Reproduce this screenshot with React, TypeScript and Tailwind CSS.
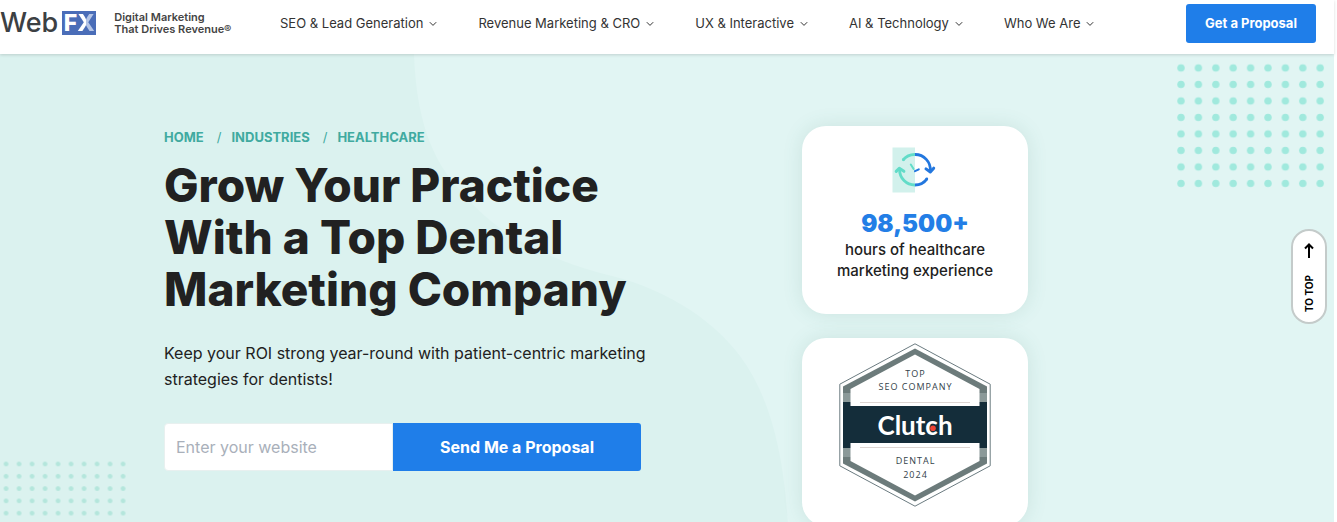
import type { ReactNode } from 'react'

const NAV = [
  'SEO & Lead Generation',
  'Revenue Marketing & CRO',
  'UX & Interactive',
  'AI & Technology',
  'Who We Are',
]

const CRUMBS = ['Home', 'Industries', 'Healthcare']

function Logo() {
  return (
    <a href="/" aria-label="WebFX" className="flex items-center gap-1">
      <span className="text-[27px] leading-[26px] font-medium text-[#3c4043]">Web</span>
      <span className="flex h-6 w-[34px] items-center justify-center bg-[#4a6db8] text-[23px] leading-6 font-extrabold">
        <span className="text-white">F</span>
        <span className="bg-linear-to-r from-white from-50% to-[#b4c4e6] to-50% bg-clip-text text-transparent">X</span>
      </span>
    </a>
  )
}

function Chevron() {
  return (
    <svg width="8" height="6" viewBox="0 0 8 6" fill="none" stroke="#333" aria-hidden="true">
      <path d="M0.8 1.2 4 4.4 7.2 1.2" />
    </svg>
  )
}

function Header() {
  return (
    <header className="relative z-10 flex h-[54px] items-start bg-white pr-[18px] shadow-[0_1px_3px_rgba(0,0,0,0.15)]">
      <div className="flex h-[46px] w-[280px] shrink-0 items-center gap-[18px]">
        <Logo />
        <p className="text-[11px] leading-3 font-semibold text-[#444]">
          Digital Marketing
          <br />
          That Drives Revenue®
        </p>
      </div>
      <nav className="flex h-12 items-center gap-[41px]">
        {NAV.map((item) => (
          <button key={item} type="button" className="flex items-center gap-1.5 text-[13px] whitespace-nowrap text-[#333]">
            {item}
            <Chevron />
          </button>
        ))}
      </nav>
      <a
        href="#proposal"
        className="mt-1 ml-auto flex h-[39px] w-[130px] items-center justify-center rounded-[3px] bg-[#1f7ee9] text-[13px] font-bold text-white"
      >
        Get a Proposal
      </a>
    </header>
  )
}

function Backdrop() {
  return (
    <svg className="absolute inset-0 h-full w-full" aria-hidden="true">
      <defs>
        <pattern id="dots-lg" width="17.4" height="16.5" patternUnits="userSpaceOnUse" x="1172.3" y="5.7">
          <circle cx="8.7" cy="8.2" r="3.7" fill="#a0e9dd" />
        </pattern>
        <pattern id="dots-sm" width="13" height="12.3" patternUnits="userSpaceOnUse" x="-0.4" y="403.8">
          <circle cx="6.5" cy="6.1" r="2.4" fill="#b4e6dc" />
        </pattern>
      </defs>
      <path
        d="M414 0C416 60 430 106 462 138C494 178 540 202 600 219C660 232 710 262 740 302C770 342 784 400 788 472L790 800H3000V0Z"
        fill="#e1f5f3"
      />
      <rect x="1172.3" y="5.7" width="156.6" height="132" fill="url(#dots-lg)" />
      <rect x="-0.4" y="403.8" width="130" height="73.8" fill="url(#dots-sm)" />
    </svg>
  )
}

function Card({ children }: { children: ReactNode }) {
  return (
    <div className="flex h-[188px] w-[226px] flex-col items-center rounded-3xl bg-white shadow-[0_0_20px_rgba(70,130,115,0.14)]">
      {children}
    </div>
  )
}

function HoursIcon() {
  return (
    <svg width="46" height="46" viewBox="0 0 46 46" fill="none" strokeWidth="2.8" strokeLinecap="round" strokeLinejoin="round" aria-hidden="true">
      <rect x="0.5" y="0.5" width="22.5" height="45" fill="#d2f1ec" />
      <g stroke="#62dcc8">
        <path d="M23 7.5A15.2 15.2 0 0 0 11 13" strokeLinecap="butt" />
        <path d="M23 38A15.2 15.2 0 0 1 7.6 22.5" strokeLinecap="butt" />
        <path d="M11.3 12.8v0" />
        <path d="M4.2 24.4 7.3 21.2l4.6 3.1" strokeWidth="3" />
        <path d="M18.8 17.5 21.6 22" strokeWidth="2" />
      </g>
      <g stroke="#2377de">
        <path d="M23 7.5A15.2 15.2 0 0 1 38.3 24" strokeLinecap="butt" />
        <path d="M23 38A15.2 15.2 0 0 0 35 31.8" strokeLinecap="butt" />
        <path d="M34.8 32v0" />
        <path d="M34 21.9 38.3 25l3.4-3.8" strokeWidth="3" />
        <path d="M23 24.2 26.8 22.3" strokeWidth="2" />
      </g>
    </svg>
  )
}

function ClutchBadge() {
  return (
    <svg width="152" height="164" viewBox="0 0 152 164" role="img" aria-label="Clutch top SEO company, dental, 2024">
      <path d="M76 0.8 151.2 41.2V122.8L76 163.2 0.8 122.8V41.2Z" fill="white" stroke="#6b7b80" strokeWidth="1" />
      <path d="M76 5.5 148 43.5V120.5L76 158.5 4 120.5V43.5Z" fill="#6c7b7b" />
      <path d="M4 50h144v9H4zM4 105h144v9H4z" fill="#8b9999" />
      <path d="M4 59h144v46H4z" fill="#142d3a" />
      <path d="M76 11.5 140.5 46V63H11.5V46ZM11.5 100h129v18L76 152.5 11.5 118Z" fill="white" />
      <path d="M21 59.5h110M21 104.5h110" stroke="#ddd5d2" />
      <g fill="#33424a" fontFamily="'Open Sans', sans-serif" fontSize="9" fontWeight="500" textAnchor="middle" letterSpacing="1">
        <text x="76.5" y="33.5">TOP</text>
        <text x="76.5" y="47">SEO COMPANY</text>
        <text x="76.5" y="121">DENTAL</text>
        <text x="76.5" y="134.5">2024</text>
      </g>
      <text x="76" y="91.5" textAnchor="middle" fill="white" fontFamily="Lato, sans-serif" fontSize="26" fontWeight="700">
        Clutch
      </text>
      <circle cx="94" cy="85.3" r="2.8" fill="#ef4335" />
    </svg>
  )
}

function Hero() {
  return (
    <section className="relative overflow-hidden bg-[#dbf2ef]">
      <Backdrop />
      <div className="relative mx-auto flex max-w-[1006px] items-start pt-[72px] pb-8">
        <div className="flex-1">
          <ol className="flex text-[13px] leading-[22px] font-bold text-[#40aaa0] uppercase">
            {CRUMBS.map((crumb, i) => (
              <li key={crumb}>
                {i > 0 && <span className="pr-[10px] pl-[13px] font-normal">/</span>}
                <a href={`#${crumb.toLowerCase()}`}>{crumb}</a>
              </li>
            ))}
          </ol>
          <h1 className="mt-[11px] text-[46px] leading-[52px] font-extrabold text-[#212121]">
            Grow Your Practice
            <br />
            With a Top Dental
            <br />
            Marketing Company
          </h1>
          <p className="mt-[25px] text-base leading-[26px] text-[#212121]">
            Keep your ROI strong year-round with patient-centric marketing
            <br />
            strategies for dentists!
          </p>
          <form id="proposal" className="mt-[31px] flex h-12 w-[477px]">
            <input
              type="text"
              aria-label="Enter your website"
              placeholder="Enter your website"
              className="min-w-0 flex-1 rounded-l-[4px] border border-[#e8f0ef] bg-white px-[11px] text-base text-[#212121] placeholder:text-[#a9b0ba]"
            />
            <button type="button" className="w-[248px] rounded-r-[3px] bg-[#1f7ee9] text-base font-bold text-white">
              Send Me a Proposal
            </button>
          </form>
        </div>
        <div className="flex w-[368px] flex-col gap-6">
          <Card>
            <div className="mt-[21px]">
              <HoursIcon />
            </div>
            <p className="mt-[17px] text-2xl leading-7 font-black text-[#237ee6]">98,500+</p>
            <p className="mt-px text-center text-[15px] leading-[21px] font-medium text-[#212121]">
              hours of healthcare
              <br />
              marketing experience
            </p>
          </Card>
          <Card>
            <div className="mt-[5px]">
              <ClutchBadge />
            </div>
          </Card>
        </div>
      </div>
    </section>
  )
}

function ToTop() {
  return (
    <button
      type="button"
      className="fixed top-[229px] right-[10px] z-20 flex h-[95px] w-9 flex-col items-center justify-between rounded-full border-2 border-[#c4cbca] bg-white pt-3 pb-[10px] text-black"
    >
      <svg width="10" height="15" viewBox="0 0 10 15" fill="none" stroke="currentColor" strokeWidth="2" aria-hidden="true">
        <path d="M5 15V2M1 5.5 5 1.5 9 5.5" />
      </svg>
      <span className="rotate-180 text-[10px] leading-3 font-bold [writing-mode:vertical-rl]">TO TOP</span>
    </button>
  )
}

export default function App() {
  return (
    <div className="min-h-screen bg-white pr-[3px] font-['Inter',sans-serif]">
      <Header />
      <Hero />
      <ToTop />
    </div>
  )
}
